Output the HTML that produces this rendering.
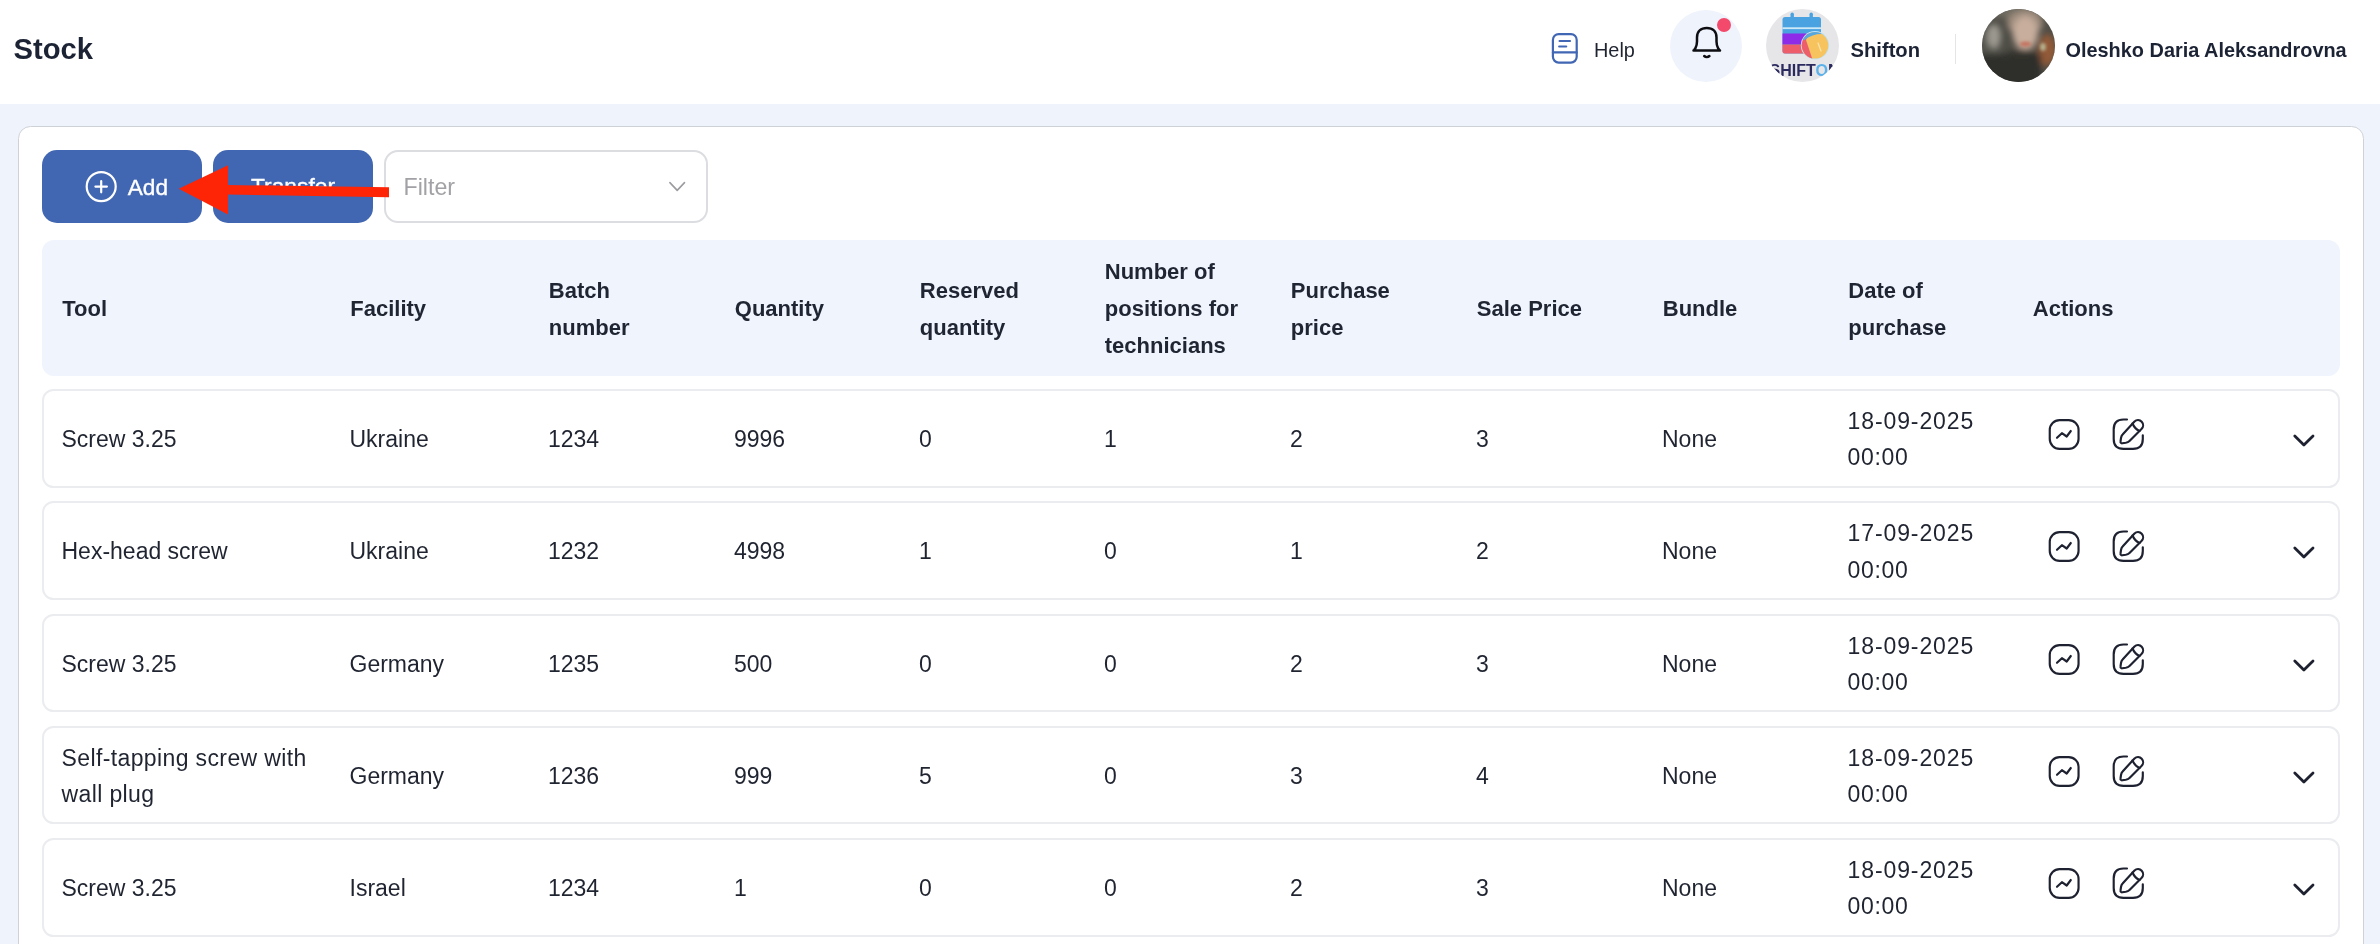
<!DOCTYPE html>
<html><head><meta charset="utf-8">
<style>
*{box-sizing:border-box;margin:0;padding:0}
html,body{width:2380px;height:944px;overflow:hidden;background:#EFF3FC;font-family:"Liberation Sans",sans-serif;color:#1F2432}
.a{position:absolute;white-space:nowrap}
#top{position:absolute;left:0;top:0;width:2380px;height:104px;background:#fff}
#card{position:absolute;left:18px;top:126px;width:2346px;height:900px;background:#fff;border:1px solid #CED1D6;border-radius:12.5px}
.btn{position:absolute;top:150px;height:73px;width:160px;background:#4267B2;border-radius:15px}
#filter{position:absolute;left:384px;top:150px;width:324px;height:73px;border:2px solid #DCDDE1;border-radius:14px;background:#fff}
#thead{position:absolute;left:42px;top:240px;width:2298px;height:135.5px;background:#F0F4FD;border-radius:12px}
.row{position:absolute;left:42px;width:2298px;height:99px;border:2px solid #EBECEF;border-radius:11.5px;background:#fff}
.h{font-weight:bold;font-size:22px;line-height:37px;color:#1F2532}
.t{font-size:23px;line-height:36px;color:#1F2430}
#wrap{position:absolute;left:0;top:0;width:2380px;height:944px;will-change:transform}
</style></head><body><div id="wrap">
<div id="top"></div>

<!-- help -->
<svg class="a" style="left:1548px;top:30px" width="34" height="38" viewBox="0 0 34 38" fill="none" stroke="#4066B4" stroke-width="2.2" stroke-linecap="round"><rect x="4.9" y="4.1" width="23.8" height="28.5" rx="5.8"/><path d="M4.9 22.4 H28.7"/><path d="M11.6 11 H22"/><path d="M11.2 16.5 H18.2"/></svg>
<div class="a" style="left:1594px;top:35px;font-size:19.9px;line-height:30px;color:#1F2430">Help</div>
<!-- bell -->
<div class="a" style="left:1670px;top:10px;width:72px;height:72px;border-radius:50%;background:#EFF3FC"></div>
<svg class="a" style="left:1688px;top:22px" width="38" height="40" viewBox="0 0 38 40" fill="none" stroke="#0E0E12" stroke-width="2.5" stroke-linecap="round" stroke-linejoin="round"><path d="M5.5 28.5 H32 C31.5 28.5 28.5 25 28.5 19.5 V15.5 C28.5 9.5 24.5 6 18.8 6 C13 6 9 9.5 9 15.5 V19.5 C9 25 6 28.5 5.5 28.5 Z"/><path d="M16.2 34 C17.6 35.3 20 35.3 21.4 34"/></svg>
<div class="a" style="left:1717px;top:18.2px;width:14px;height:14px;border-radius:50%;background:#F3496B"></div>
<!-- shifton avatar -->
<svg class="a" style="left:1766px;top:8.5px" width="73" height="73" viewBox="0 0 73 73">
<defs><clipPath id="cc"><circle cx="36.5" cy="36.5" r="36.5"/></clipPath><clipPath id="clk"><circle cx="49" cy="36.3" r="13.3"/></clipPath></defs>
<g clip-path="url(#cc)">
<rect width="73" height="73" fill="#E6E6E9"/>
<rect x="16.5" y="8" width="38.5" height="36.5" rx="2.5" fill="#4AA3E0"/>
<rect x="16.5" y="24.5" width="38.5" height="11" fill="#8D2BE8"/>
<path d="M16.5 35.5 H55 V42 Q55 44.5 52.5 44.5 H19 Q16.5 44.5 16.5 42 Z" fill="#EE5D6A"/>
<rect x="16.5" y="18.3" width="38.5" height="1.8" fill="#CDE9F8"/>
<rect x="24.5" y="3.5" width="3.4" height="8" rx="1.7" fill="#4AA3E0"/>
<rect x="43.5" y="3.5" width="3.4" height="8" rx="1.7" fill="#4AA3E0"/>
<circle cx="49" cy="36.3" r="14.2" fill="#BFE3F8"/>
<g clip-path="url(#clk)">
<rect x="30" y="20" width="40" height="35" fill="#F6C35E"/>
<path d="M30 20 L45 20 L40 31 L47 52 L30 52 Z" fill="#EC5E6B"/>
<path d="M30 20 L62 20 L62 26 C55 24 46 25 38.5 31 L30 31 Z" fill="#55A8E2"/>
</g>
<path d="M52 34 L55 42" stroke="#FBE3A8" stroke-width="1.3" stroke-linecap="round"/>
<text x="3.5" y="66.8" font-family="Liberation Sans" font-weight="bold" font-size="16" fill="#2B2A5E">SHIFT<tspan fill="#5BB2EA">O</tspan>N</text>
</g></svg>
<div class="a" style="left:1850.5px;top:34.7px;font-size:20.2px;line-height:30px;font-weight:bold;color:#1C2334">Shifton</div>
<div class="a" style="left:1954.5px;top:34px;width:1.5px;height:30px;background:#E3E5E9"></div>
<!-- user avatar -->
<svg class="a" style="left:1981.5px;top:8.7px" width="73" height="73" viewBox="0 0 73 73">
<defs><clipPath id="uc"><circle cx="36.5" cy="36.5" r="36.5"/></clipPath>
<filter id="bl" x="-50%" y="-50%" width="200%" height="200%"><feGaussianBlur stdDeviation="3"/></filter>
<filter id="bl2" x="-50%" y="-50%" width="200%" height="200%"><feGaussianBlur stdDeviation="1.5"/></filter></defs>
<g clip-path="url(#uc)">
<rect width="73" height="73" fill="#4E4D46"/>
<g filter="url(#bl)">
<ellipse cx="36" cy="2" rx="30" ry="8" fill="#6E6A60"/>
<ellipse cx="8" cy="40" rx="10" ry="22" fill="#55554E"/>
<ellipse cx="12" cy="27" rx="7" ry="12" fill="#9C9A90"/>
<ellipse cx="43" cy="14" rx="18" ry="13" fill="#9E8D7E"/>
<ellipse cx="43.3" cy="24" rx="12.5" ry="17" fill="#C8AE9D"/>
<ellipse cx="65" cy="41" rx="9" ry="16" fill="#925A38"/>
<rect x="-5" y="45" width="64" height="35" fill="#2D2E2A"/>
<ellipse cx="40" cy="44" rx="14" ry="4" fill="#34352F"/>
</g>
<g filter="url(#bl2)">
<ellipse cx="43.5" cy="35" rx="5.5" ry="2.6" fill="#C4735F"/>
<ellipse cx="61" cy="38" rx="3" ry="4" fill="#B5AE8A"/>
</g>
</g></svg>
<div class="a" style="left:2065.5px;top:34.8px;font-size:19.9px;line-height:30px;font-weight:bold;color:#1C2334">Oleshko Daria Aleksandrovna</div>

<div class="a" style="left:13.5px;top:29.3px;font-size:29.2px;line-height:40px;font-weight:bold;color:#1C2334">Stock</div>

<div id="card"></div>
<div class="btn" style="left:42px"></div>
<div class="btn" style="left:213px"></div>
<div id="filter"></div>
<svg class="a" style="left:84px;top:169px" width="35" height="35" viewBox="0 0 35 35" fill="none" stroke="#fff" stroke-width="2.2" stroke-linecap="round"><circle cx="17.2" cy="17.6" r="14.5"/><path d="M11.4 17.6 H22.9"/><path d="M17.2 12 V23.3"/></svg>
<div class="a" style="left:127.8px;top:172.6px;font-size:22.6px;line-height:30px;color:#fff;-webkit-text-stroke:0.35px #fff">Add</div>
<div class="a" style="left:251px;top:171.2px;font-size:22.8px;line-height:30px;color:#fff;-webkit-text-stroke:0.35px #fff">Transfer</div>
<div class="a" style="left:403.5px;top:172.3px;font-size:23.2px;line-height:30px;color:#A2A2A6">Filter</div>
<svg class="a" style="left:664px;top:176px" width="26" height="20" viewBox="0 0 26 20" fill="none" stroke="#9C9CA0" stroke-width="1.6" stroke-linecap="round" stroke-linejoin="round"><path d="M5.9 6.6 L13.2 14.4 L20.5 6.6"/></svg>
<svg class="a" style="left:0;top:0" width="400" height="230" viewBox="0 0 400 230"><polygon fill="#FE2406" points="178.7,188.8 228,165.3 228,214.4"/><polygon fill="#FE2406" points="227,185 389,187.2 389,197.3 227,194.4"/></svg>

<div id="thead"></div>
<div class="a h" style="left:62.3px;top:290.08px">Tool</div>
<div class="a h" style="left:350.3px;top:290.08px">Facility</div>
<div class="a h" style="left:548.8px;top:271.58px">Batch<br>number</div>
<div class="a h" style="left:734.8px;top:290.08px">Quantity</div>
<div class="a h" style="left:919.8px;top:271.58px">Reserved<br>quantity</div>
<div class="a h" style="left:1104.8px;top:253.08px">Number of<br>positions for<br>technicians</div>
<div class="a h" style="left:1290.8px;top:271.58px">Purchase<br>price</div>
<div class="a h" style="left:1476.8px;top:290.08px">Sale Price</div>
<div class="a h" style="left:1662.8px;top:290.08px">Bundle</div>
<div class="a h" style="left:1848.3px;top:271.58px">Date of<br>purchase</div>
<div class="a h" style="left:2032.8px;top:290.08px">Actions</div>
<div class="row" style="top:389.0px;height:98.5px"></div>
<div class="a t" style="left:61.5px;top:421.18px">Screw 3.25</div>
<div class="a t" style="left:349.5px;top:421.18px">Ukraine</div>
<div class="a t" style="left:548px;top:421.18px">1234</div>
<div class="a t" style="left:734px;top:421.18px">9996</div>
<div class="a t" style="left:919px;top:421.18px">0</div>
<div class="a t" style="left:1104px;top:421.18px">1</div>
<div class="a t" style="left:1290px;top:421.18px">2</div>
<div class="a t" style="left:1476px;top:421.18px">3</div>
<div class="a t" style="left:1662px;top:421.18px">None</div>
<div class="a t" style="left:1847.5px;top:403.08px;letter-spacing:0.9px">18-09-2025</div>
<div class="a t" style="left:1847.5px;top:439.38px;letter-spacing:0.7px">00:00</div>
<svg class="a" style="left:2044px;top:414.00px" width="40" height="40" viewBox="2044 414 40 40" fill="none" stroke="#1E2130" stroke-width="2.15" stroke-linecap="round" stroke-linejoin="round"><rect x="2049.75" y="420.05" width="28.8" height="28.8" rx="9.8"/><path d="M2057 437.8 L2061.9 433.2 L2066.7 436.5 L2070.8 431"/></svg>
<svg class="a" style="left:2108px;top:414.00px" width="40" height="40" viewBox="2108 414 40 40" fill="none" stroke="#1E2130" stroke-width="2.15" stroke-linecap="round" stroke-linejoin="round"><path d="M2127 419.5 H2123.5 C2117 419.5 2113.7 422.8 2113.7 429.3 V439 C2113.7 445.5 2117 448.8 2123.5 448.8 H2133 C2139.5 448.8 2142.8 445.5 2142.8 439 V435.2"/><path d="M2134.5 421.5 A5.13 5.13 0 0 1 2141.5 429 L2129.5 441 C2128.5 442 2127 442.6 2125.8 442.8 L2122.3 443.3 C2121 443.5 2120.3 442.6 2120.5 441.5 L2121 438 C2121.2 436.7 2121.7 435.3 2122.6 434.4 Z"/><path d="M2132.5 423.5 C2134 427 2136 429.5 2139.5 431"/></svg>
<svg class="a" style="left:2288px;top:428.00px" width="32" height="24" viewBox="2288 428 32 24" fill="none" stroke="#1E2130" stroke-width="2.8" stroke-linecap="round" stroke-linejoin="round"><path d="M2294.8 436 L2303.9 445 L2313 436"/></svg>
<div class="row" style="top:501.25px;height:98.5px"></div>
<div class="a t" style="left:61.5px;top:533.43px">Hex-head screw</div>
<div class="a t" style="left:349.5px;top:533.43px">Ukraine</div>
<div class="a t" style="left:548px;top:533.43px">1232</div>
<div class="a t" style="left:734px;top:533.43px">4998</div>
<div class="a t" style="left:919px;top:533.43px">1</div>
<div class="a t" style="left:1104px;top:533.43px">0</div>
<div class="a t" style="left:1290px;top:533.43px">1</div>
<div class="a t" style="left:1476px;top:533.43px">2</div>
<div class="a t" style="left:1662px;top:533.43px">None</div>
<div class="a t" style="left:1847.5px;top:515.33px;letter-spacing:0.9px">17-09-2025</div>
<div class="a t" style="left:1847.5px;top:551.63px;letter-spacing:0.7px">00:00</div>
<svg class="a" style="left:2044px;top:526.25px" width="40" height="40" viewBox="2044 414 40 40" fill="none" stroke="#1E2130" stroke-width="2.15" stroke-linecap="round" stroke-linejoin="round"><rect x="2049.75" y="420.05" width="28.8" height="28.8" rx="9.8"/><path d="M2057 437.8 L2061.9 433.2 L2066.7 436.5 L2070.8 431"/></svg>
<svg class="a" style="left:2108px;top:526.25px" width="40" height="40" viewBox="2108 414 40 40" fill="none" stroke="#1E2130" stroke-width="2.15" stroke-linecap="round" stroke-linejoin="round"><path d="M2127 419.5 H2123.5 C2117 419.5 2113.7 422.8 2113.7 429.3 V439 C2113.7 445.5 2117 448.8 2123.5 448.8 H2133 C2139.5 448.8 2142.8 445.5 2142.8 439 V435.2"/><path d="M2134.5 421.5 A5.13 5.13 0 0 1 2141.5 429 L2129.5 441 C2128.5 442 2127 442.6 2125.8 442.8 L2122.3 443.3 C2121 443.5 2120.3 442.6 2120.5 441.5 L2121 438 C2121.2 436.7 2121.7 435.3 2122.6 434.4 Z"/><path d="M2132.5 423.5 C2134 427 2136 429.5 2139.5 431"/></svg>
<svg class="a" style="left:2288px;top:540.25px" width="32" height="24" viewBox="2288 428 32 24" fill="none" stroke="#1E2130" stroke-width="2.8" stroke-linecap="round" stroke-linejoin="round"><path d="M2294.8 436 L2303.9 445 L2313 436"/></svg>
<div class="row" style="top:613.5px;height:98.5px"></div>
<div class="a t" style="left:61.5px;top:645.68px">Screw 3.25</div>
<div class="a t" style="left:349.5px;top:645.68px">Germany</div>
<div class="a t" style="left:548px;top:645.68px">1235</div>
<div class="a t" style="left:734px;top:645.68px">500</div>
<div class="a t" style="left:919px;top:645.68px">0</div>
<div class="a t" style="left:1104px;top:645.68px">0</div>
<div class="a t" style="left:1290px;top:645.68px">2</div>
<div class="a t" style="left:1476px;top:645.68px">3</div>
<div class="a t" style="left:1662px;top:645.68px">None</div>
<div class="a t" style="left:1847.5px;top:627.58px;letter-spacing:0.9px">18-09-2025</div>
<div class="a t" style="left:1847.5px;top:663.88px;letter-spacing:0.7px">00:00</div>
<svg class="a" style="left:2044px;top:638.50px" width="40" height="40" viewBox="2044 414 40 40" fill="none" stroke="#1E2130" stroke-width="2.15" stroke-linecap="round" stroke-linejoin="round"><rect x="2049.75" y="420.05" width="28.8" height="28.8" rx="9.8"/><path d="M2057 437.8 L2061.9 433.2 L2066.7 436.5 L2070.8 431"/></svg>
<svg class="a" style="left:2108px;top:638.50px" width="40" height="40" viewBox="2108 414 40 40" fill="none" stroke="#1E2130" stroke-width="2.15" stroke-linecap="round" stroke-linejoin="round"><path d="M2127 419.5 H2123.5 C2117 419.5 2113.7 422.8 2113.7 429.3 V439 C2113.7 445.5 2117 448.8 2123.5 448.8 H2133 C2139.5 448.8 2142.8 445.5 2142.8 439 V435.2"/><path d="M2134.5 421.5 A5.13 5.13 0 0 1 2141.5 429 L2129.5 441 C2128.5 442 2127 442.6 2125.8 442.8 L2122.3 443.3 C2121 443.5 2120.3 442.6 2120.5 441.5 L2121 438 C2121.2 436.7 2121.7 435.3 2122.6 434.4 Z"/><path d="M2132.5 423.5 C2134 427 2136 429.5 2139.5 431"/></svg>
<svg class="a" style="left:2288px;top:652.50px" width="32" height="24" viewBox="2288 428 32 24" fill="none" stroke="#1E2130" stroke-width="2.8" stroke-linecap="round" stroke-linejoin="round"><path d="M2294.8 436 L2303.9 445 L2313 436"/></svg>
<div class="row" style="top:725.75px;height:98.5px"></div>
<div class="a t" style="left:61.5px;top:739.83px;letter-spacing:0.38px">Self-tapping screw with<br>wall plug</div>
<div class="a t" style="left:349.5px;top:757.93px">Germany</div>
<div class="a t" style="left:548px;top:757.93px">1236</div>
<div class="a t" style="left:734px;top:757.93px">999</div>
<div class="a t" style="left:919px;top:757.93px">5</div>
<div class="a t" style="left:1104px;top:757.93px">0</div>
<div class="a t" style="left:1290px;top:757.93px">3</div>
<div class="a t" style="left:1476px;top:757.93px">4</div>
<div class="a t" style="left:1662px;top:757.93px">None</div>
<div class="a t" style="left:1847.5px;top:739.83px;letter-spacing:0.9px">18-09-2025</div>
<div class="a t" style="left:1847.5px;top:776.13px;letter-spacing:0.7px">00:00</div>
<svg class="a" style="left:2044px;top:750.75px" width="40" height="40" viewBox="2044 414 40 40" fill="none" stroke="#1E2130" stroke-width="2.15" stroke-linecap="round" stroke-linejoin="round"><rect x="2049.75" y="420.05" width="28.8" height="28.8" rx="9.8"/><path d="M2057 437.8 L2061.9 433.2 L2066.7 436.5 L2070.8 431"/></svg>
<svg class="a" style="left:2108px;top:750.75px" width="40" height="40" viewBox="2108 414 40 40" fill="none" stroke="#1E2130" stroke-width="2.15" stroke-linecap="round" stroke-linejoin="round"><path d="M2127 419.5 H2123.5 C2117 419.5 2113.7 422.8 2113.7 429.3 V439 C2113.7 445.5 2117 448.8 2123.5 448.8 H2133 C2139.5 448.8 2142.8 445.5 2142.8 439 V435.2"/><path d="M2134.5 421.5 A5.13 5.13 0 0 1 2141.5 429 L2129.5 441 C2128.5 442 2127 442.6 2125.8 442.8 L2122.3 443.3 C2121 443.5 2120.3 442.6 2120.5 441.5 L2121 438 C2121.2 436.7 2121.7 435.3 2122.6 434.4 Z"/><path d="M2132.5 423.5 C2134 427 2136 429.5 2139.5 431"/></svg>
<svg class="a" style="left:2288px;top:764.75px" width="32" height="24" viewBox="2288 428 32 24" fill="none" stroke="#1E2130" stroke-width="2.8" stroke-linecap="round" stroke-linejoin="round"><path d="M2294.8 436 L2303.9 445 L2313 436"/></svg>
<div class="row" style="top:838.0px;height:98.5px"></div>
<div class="a t" style="left:61.5px;top:870.18px">Screw 3.25</div>
<div class="a t" style="left:349.5px;top:870.18px">Israel</div>
<div class="a t" style="left:548px;top:870.18px">1234</div>
<div class="a t" style="left:734px;top:870.18px">1</div>
<div class="a t" style="left:919px;top:870.18px">0</div>
<div class="a t" style="left:1104px;top:870.18px">0</div>
<div class="a t" style="left:1290px;top:870.18px">2</div>
<div class="a t" style="left:1476px;top:870.18px">3</div>
<div class="a t" style="left:1662px;top:870.18px">None</div>
<div class="a t" style="left:1847.5px;top:852.08px;letter-spacing:0.9px">18-09-2025</div>
<div class="a t" style="left:1847.5px;top:888.38px;letter-spacing:0.7px">00:00</div>
<svg class="a" style="left:2044px;top:863.00px" width="40" height="40" viewBox="2044 414 40 40" fill="none" stroke="#1E2130" stroke-width="2.15" stroke-linecap="round" stroke-linejoin="round"><rect x="2049.75" y="420.05" width="28.8" height="28.8" rx="9.8"/><path d="M2057 437.8 L2061.9 433.2 L2066.7 436.5 L2070.8 431"/></svg>
<svg class="a" style="left:2108px;top:863.00px" width="40" height="40" viewBox="2108 414 40 40" fill="none" stroke="#1E2130" stroke-width="2.15" stroke-linecap="round" stroke-linejoin="round"><path d="M2127 419.5 H2123.5 C2117 419.5 2113.7 422.8 2113.7 429.3 V439 C2113.7 445.5 2117 448.8 2123.5 448.8 H2133 C2139.5 448.8 2142.8 445.5 2142.8 439 V435.2"/><path d="M2134.5 421.5 A5.13 5.13 0 0 1 2141.5 429 L2129.5 441 C2128.5 442 2127 442.6 2125.8 442.8 L2122.3 443.3 C2121 443.5 2120.3 442.6 2120.5 441.5 L2121 438 C2121.2 436.7 2121.7 435.3 2122.6 434.4 Z"/><path d="M2132.5 423.5 C2134 427 2136 429.5 2139.5 431"/></svg>
<svg class="a" style="left:2288px;top:877.00px" width="32" height="24" viewBox="2288 428 32 24" fill="none" stroke="#1E2130" stroke-width="2.8" stroke-linecap="round" stroke-linejoin="round"><path d="M2294.8 436 L2303.9 445 L2313 436"/></svg>
</div></body></html>
